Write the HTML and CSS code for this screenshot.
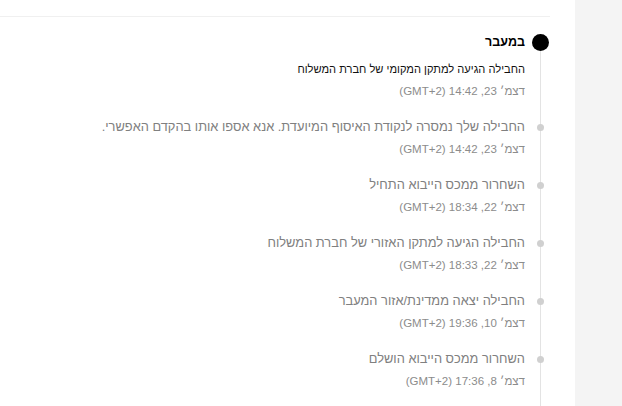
FILE: index.html
```html
<!DOCTYPE html>
<html lang="he">
	<head>
		<meta charset="UTF-8">
		<title>מעקב משלוח</title>
		<link rel="stylesheet" href="styles.css">
	</head>
	<body>
		<div class="page">
			<div class="main">
				<div class="topbar"></div>
				<ul class="track" dir="rtl">
					<li class="step active">
						<div class="mark"><span class="dot"></span></div>
						<div class="info">
							<h3 class="status">במעבר</h3>
							<p class="desc">החבילה הגיעה למתקן המקומי של חברת המשלוח</p>
							<p class="time">דצמ׳ 23, 14:42 (GMT+2)</p>
						</div>
					</li>
					<li class="step">
						<div class="mark"><span class="dot"></span></div>
						<div class="info">
							<p class="desc">החבילה שלך נמסרה לנקודת האיסוף המיועדת. אנא אספו אותו בהקדם האפשרי.</p>
							<p class="time">דצמ׳ 23, 14:42 (GMT+2)</p>
						</div>
					</li>
					<li class="step">
						<div class="mark"><span class="dot"></span></div>
						<div class="info">
							<p class="desc">השחרור ממכס הייבוא התחיל</p>
							<p class="time">דצמ׳ 22, 18:34 (GMT+2)</p>
						</div>
					</li>
					<li class="step">
						<div class="mark"><span class="dot"></span></div>
						<div class="info">
							<p class="desc">החבילה הגיעה למתקן האזורי של חברת המשלוח</p>
							<p class="time">דצמ׳ 22, 18:33 (GMT+2)</p>
						</div>
					</li>
					<li class="step">
						<div class="mark"><span class="dot"></span></div>
						<div class="info">
							<p class="desc">החבילה יצאה ממדינת/אזור המעבר</p>
							<p class="time">דצמ׳ 10, 19:36 (GMT+2)</p>
						</div>
					</li>
					<li class="step">
						<div class="mark"><span class="dot"></span></div>
						<div class="info">
							<p class="desc">השחרור ממכס הייבוא הושלם</p>
							<p class="time">דצמ׳ 8, 17:36 (GMT+2)</p>
						</div>
					</li>
				</ul>
			</div>
			<div class="side"></div>
		</div>
	</body>
</html>
```

FILE: styles.css
```css
* { padding: 0; margin: 0; box-sizing: border-box; }
html, body { height: 100%; overflow: hidden; }
body { font: 12.85px "Liberation Sans", Arial, sans-serif; color: #222; background: #fff; }
ul { list-style: none; }

.page { display: flex; height: 100%; }
/*左侧白色区域*/
.main { width: 575px; padding-right: 25px; }
.topbar { height: 17px; border-bottom: 1px solid #f0f0f0; }
/*右侧灰色条*/
.side { flex: 1; background: #f4f4f4; }

/*时间线*/
.track { padding-top: 15px; }
.step { display: flex; }
.mark {
	width: 20px;
	flex: none;
	margin-left: 5px;
	display: flex;
	justify-content: center;
	background: linear-gradient(#e3e3e3, #e3e3e3) center bottom / 1px 100% no-repeat;
}
.step.active .mark { background-size: 1px calc(100% - 10px); }
.dot {
	display: block;
	width: 7px;
	height: 7px;
	margin-top: 7px;
	border-radius: 50%;
	background: #d0d0d0;
}
.step.active .dot { width: 17px; height: 17px; margin-top: 2px; background: #000; }

.info { padding-bottom: 16px; }
.status { font-size: 12.5px; font-weight: bold; line-height: 20px; color: #000; margin-bottom: 7px; }
.desc { line-height: 20px; color: #808080; }
.step.active .desc { color: #111; font-size: 11.1px; }
.time { font-size: 11.5px; line-height: 20px; margin-top: 2px; color: #8c8c8c; }
```
